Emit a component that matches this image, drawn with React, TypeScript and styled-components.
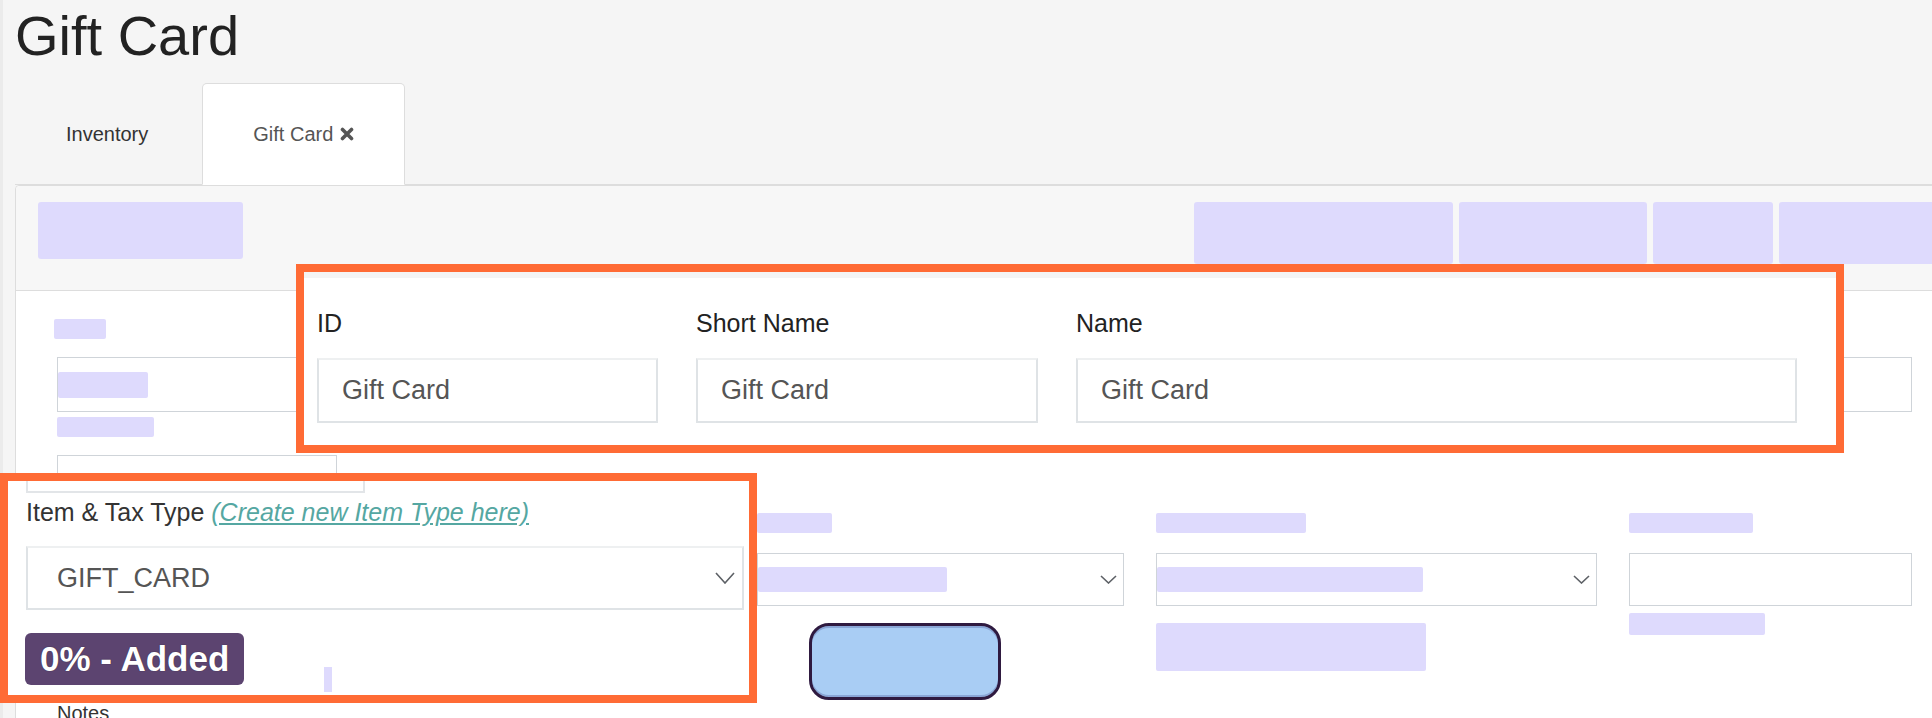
import React from "react";
import styled, { createGlobalStyle } from "styled-components";

const GlobalStyle = createGlobalStyle`
	html, body {
		margin: 0;
		padding: 0;
	}

	body {
		background: #f5f5f5;
		font-family: "Liberation Sans", Arial, sans-serif;
		color: #333;
		overflow: hidden;
	}
`;

const Page = styled.div`
	width: 1932px;
	height: 718px;

	position: relative;
	box-sizing: border-box;
	padding-left: 15px;
	overflow: hidden;

	box-shadow: inset 3px 0 0 #ebebeb;
`;

const Title = styled.h1`
	margin: 0;
	padding-top: 3px;

	font-size: 56px;
	line-height: 66px;
	font-weight: 400;
	color: #222;
`;

const Tabs = styled.div`
	height: 101px;
	margin-top: 14px;

	display: flex;
	border-bottom: 1px solid #ddd;
`;

const Tab = styled.div<{ $active?: boolean }>`
	margin-right: 3px;
	margin-bottom: -1px;
	padding: 0 50px;

	display: flex;
	align-items: center;
	gap: 7px;

	font-size: 20px;
	line-height: 23px;
	color: ${({ $active }) => ($active ? "#555" : "#333")};
	background: ${({ $active }) => ($active ? "#fff" : "transparent")};
	border: 1px solid ${({ $active }) => ($active ? "#ddd" : "transparent")};
	border-bottom-color: transparent;
	border-radius: 5px 5px 0 0;
`;

const Panel = styled.div`
	width: 2013px;

	background: #fff;
	border: 1px solid #ddd;
	border-radius: 4px;
`;

const PanelHeader = styled.div`
	height: 105px;

	box-sizing: border-box;
	padding: 16px 0 0 22px;
	display: flex;
	align-items: flex-start;
	justify-content: space-between;

	background: #f7f7f7;
	border-bottom: 1px solid #ddd;
	border-radius: 4px 4px 0 0;
`;

const ActionGroup = styled.div`
	display: flex;
	gap: 6px;
`;

const Redacted = styled.div<{ $w: number; $h: number; $r?: number }>`
	width: ${({ $w }) => $w}px;
	height: ${({ $h }) => $h}px;
	flex: none;

	background: #dedafd;
	border-radius: ${({ $r }) => $r ?? 2}px;
`;

const PanelBody = styled.div`
	padding: 28px 0 0 41px;
`;

const FormRow = styled.div<{ $top?: number }>`
	margin-top: ${({ $top }) => $top ?? 0}px;

	display: grid;
	grid-template-columns: 668px 367px 441px 283px;
	column-gap: 32px;
	align-items: start;
`;

const Field = styled.div`
	display: flex;
	flex-direction: column;
	align-items: flex-start;
`;

const LabelSlot = styled.div<{ $gap: number; $shift?: number }>`
	margin-bottom: ${({ $gap }) => $gap}px;
	margin-left: ${({ $shift }) => $shift ?? 0}px;
`;

const Spaced = styled.div<{ $top: number }>`
	margin-top: ${({ $top }) => $top}px;
`;

const Box = styled.div<{ $w?: number; $h: number }>`
	width: ${({ $w }) => ($w ? `${$w}px` : "100%")};
	height: ${({ $h }) => $h}px;

	box-sizing: border-box;
	display: flex;
	align-items: center;
	justify-content: space-between;
	padding-right: 6px;

	background: #fff;
	border: 1px solid #cfd4d9;
`;

const BlueButton = styled.div`
	width: 192px;
	height: 77px;
	margin: 17px 0 0 52px;

	box-sizing: border-box;
	background: #a9cdf4;
	border: 3px solid #2f1a40;
	border-radius: 20px;
	box-shadow: inset 0 2px 0 #8aa6d6, inset 0 -2px 0 #8aa6d6;
`;

const Notes = styled.div`
	margin-top: 2px;

	font-size: 20px;
	line-height: 23px;
	color: #333;
`;

const Callout = styled.div<{ $left: number; $top: number; $w: number; $h: number }>`
	width: ${({ $w }) => $w}px;
	height: ${({ $h }) => $h}px;

	position: absolute;
	left: ${({ $left }) => $left}px;
	top: ${({ $top }) => $top}px;
	box-sizing: border-box;
	overflow: hidden;

	background: #fff;
	border: 8px solid #ff6b35;
`;

const HeaderSliver = styled.div`
	height: 6px;
	background: #f4f4f4;
`;

const ZoomFields = styled.div`
	padding: 31px 0 0 13px;

	display: grid;
	grid-template-columns: 341px 342px 721px;
	column-gap: 38px;
`;

const ZoomLabel = styled.div`
	margin-bottom: 20px;

	font-size: 25px;
	line-height: 29px;
	color: #222;
`;

const ZoomInput = styled.div<{ $h: number }>`
	height: ${({ $h }) => $h}px;

	box-sizing: border-box;
	display: flex;
	align-items: center;
	justify-content: space-between;
	padding: 0 7px 0 23px;

	font-size: 27px;
	color: #555;
	background: #fff;
	border: 2px solid #dfe3e6;
	border-top-color: #eef0f1;
`;

const InputEdge = styled.div`
	width: 339px;
	height: 12px;
	margin-left: 18px;

	box-sizing: border-box;
	border: 2px solid #e2e5e8;
	border-top: none;
`;

const TypeLabel = styled.div`
	margin: 5px 0 0 18px;

	font-size: 25px;
	line-height: 29px;
	color: #333;
	white-space: nowrap;
`;

const CreateLink = styled.a`
	font-style: italic;
	color: #55a7a2;
	text-decoration: underline;
`;

const TypeSelect = styled(ZoomInput)`
	margin: 19px 5px 0 18px;
	padding-left: 29px;
	font-size: 27px;
`;

const BadgeRow = styled.div`
	margin: 23px 0 0 17px;

	display: flex;
	align-items: flex-start;
`;

const Badge = styled.div`
	height: 52px;
	padding: 0 15px;

	display: flex;
	align-items: center;

	font-size: 35px;
	font-weight: 700;
	color: #fff;
	background: #5c4470;
	border-radius: 6px;
	text-shadow: 0 0 1px rgba(0, 0, 0, 0.6);
`;

const Chevron = ({ w, h }: { w: number; h: number }) => (
	<svg width={w} height={h} viewBox={`0 0 ${w} ${h}`} fill="none">
		<polyline
			points={`1,1 ${w / 2},${h - 1} ${w - 1},1`}
			stroke="#5d6166"
			strokeWidth="1.6"
		/>
	</svg>
);

const CloseIcon = () => (
	<svg width="14" height="14" viewBox="0 0 14 14">
		<path
			d="M2.5 2.5 L11.5 11.5 M11.5 2.5 L2.5 11.5"
			stroke="#555"
			strokeWidth="3.6"
			strokeLinecap="round"
		/>
	</svg>
);

function App() {
	return (
		<Page>
			<GlobalStyle />
			<Title>Gift Card</Title>

			<Tabs>
				<Tab>Inventory</Tab>
				<Tab $active>
					Gift Card
					<CloseIcon />
				</Tab>
			</Tabs>

			<Panel>
				<PanelHeader>
					<Redacted $w={205} $h={57} $r={3} />
					<ActionGroup>
						<Redacted $w={259} $h={62} $r={3} />
						<Redacted $w={188} $h={62} $r={3} />
						<Redacted $w={120} $h={62} $r={3} />
						<Redacted $w={250} $h={62} $r={3} />
					</ActionGroup>
				</PanelHeader>

				<PanelBody>
					<FormRow>
						<Field>
							<LabelSlot $gap={18} $shift={-3}>
								<Redacted $w={52} $h={20} />
							</LabelSlot>
							<Box $h={55}>
								<Redacted $w={90} $h={26} />
							</Box>
							<Spaced $top={5}>
								<Redacted $w={97} $h={20} />
							</Spaced>
						</Field>
						<Field>
							<LabelSlot $gap={18}>
								<Redacted $w={80} $h={20} />
							</LabelSlot>
							<Box $h={55} />
						</Field>
						<Field>
							<LabelSlot $gap={18}>
								<Redacted $w={80} $h={20} />
							</LabelSlot>
							<Box $h={55} />
						</Field>
						<Field>
							<LabelSlot $gap={18}>
								<Redacted $w={80} $h={20} />
							</LabelSlot>
							<Box $h={55} />
						</Field>
					</FormRow>

					<FormRow $top={18}>
						<Field>
							<Box $w={280} $h={50} />
						</Field>
					</FormRow>

					<FormRow $top={8}>
						<Field>
							<LabelSlot $gap={20}>
								<Redacted $w={150} $h={20} />
							</LabelSlot>
							<Box $h={53}>
								<span />
								<Chevron w={17} h={9} />
							</Box>
						</Field>
						<Field>
							<LabelSlot $gap={20}>
								<Redacted $w={75} $h={20} />
							</LabelSlot>
							<Box $h={53}>
								<Redacted $w={189} $h={25} />
								<Chevron w={17} h={9} />
							</Box>
							<BlueButton />
						</Field>
						<Field>
							<LabelSlot $gap={20}>
								<Redacted $w={150} $h={20} />
							</LabelSlot>
							<Box $h={53}>
								<Redacted $w={266} $h={25} />
								<Chevron w={17} h={9} />
							</Box>
							<Spaced $top={17}>
								<Redacted $w={270} $h={48} />
							</Spaced>
						</Field>
						<Field>
							<LabelSlot $gap={20}>
								<Redacted $w={124} $h={20} />
							</LabelSlot>
							<Box $h={53} />
							<Spaced $top={7}>
								<Redacted $w={136} $h={22} />
							</Spaced>
						</Field>
					</FormRow>

					<Notes>Notes</Notes>
				</PanelBody>
			</Panel>

			<Callout $left={296} $top={264} $w={1548} $h={189}>
				<HeaderSliver />
				<ZoomFields>
					<div>
						<ZoomLabel>ID</ZoomLabel>
						<ZoomInput $h={65}>Gift Card</ZoomInput>
					</div>
					<div>
						<ZoomLabel>Short Name</ZoomLabel>
						<ZoomInput $h={65}>Gift Card</ZoomInput>
					</div>
					<div>
						<ZoomLabel>Name</ZoomLabel>
						<ZoomInput $h={65}>Gift Card</ZoomInput>
					</div>
				</ZoomFields>
			</Callout>

			<Callout $left={0} $top={473} $w={757} $h={230}>
				<InputEdge />
				<TypeLabel>
					Item &amp; Tax Type{" "}
					<CreateLink>(Create new Item Type here)</CreateLink>
				</TypeLabel>
				<TypeSelect $h={64}>
					GIFT_CARD
					<Chevron w={20} h={12} />
				</TypeSelect>
				<BadgeRow>
					<Badge>0% - Added</Badge>
					<Spaced $top={34} style={{ marginLeft: 80 }}>
						<Redacted $w={8} $h={25} $r={0} />
					</Spaced>
				</BadgeRow>
			</Callout>
		</Page>
	);
}

export default App;
